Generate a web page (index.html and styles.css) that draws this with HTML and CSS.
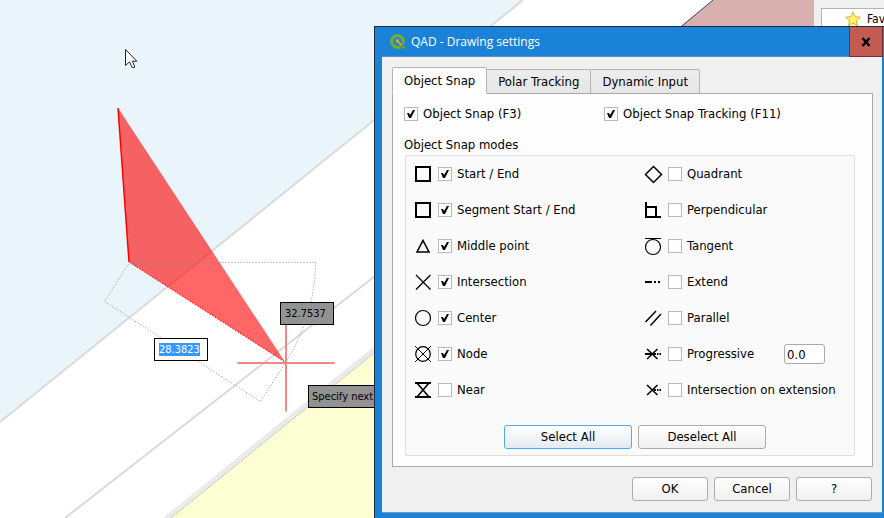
FILE: index.html
```html
<!DOCTYPE html>
<html lang="en">
<head>
<meta charset="utf-8">
<title>QAD - Drawing settings</title>
<link rel="stylesheet" href="styles.css">
</head>
<body>
<main class="desktop">
  <svg class="map" viewBox="0 0 884 518" preserveAspectRatio="xMinYMin slice" aria-hidden="true">
    <rect width="884" height="518" fill="#fff"/>
    <path d="M0 0H523L0 422Z" fill="#e9f4fb"/>
    <path d="M523 0L0 422M420 241L65 518" fill="none" stroke="#dadada" stroke-width="2"/>
    <path d="M163 518L384 338V352L171 518Z" fill="#ebebeb"/>
    <path d="M171 518L374 353H400V518Z" fill="#fcffd2"/>
    <path d="M171 518L374 353" stroke="#aaa" stroke-width=".8" stroke-dasharray="2 1"/>
    <path d="M713 0H815V40H664Z" fill="#d8b0b0"/>
    <path d="M713 0L664 41" stroke="#444"/>
    <path d="M118 108L129 262L285 362Z" fill="#f00" fill-opacity=".6"/>
    <path d="M118 108L129 262" stroke="#f00" stroke-width="1.5"/>
    <path d="M129 262L285 362" stroke="#f00" stroke-dasharray="1.5 1.5"/>
    <path d="M129.500 262.500H315.500A186 186 0 0 1 285.500 362.500L260.500 401.500L104.500 301.500Z" fill="none" stroke="#888" stroke-dasharray="1 2"/>
    <path d="M237.500 363H334.500M286 315V411.500" stroke="#f28787" stroke-width="2"/>
    <path d="M125.500 49.500V65.500L129.500 61.800L132.200 67.500H134.500V66L132.300 61.200H136.800Z" fill="#fff" stroke="#1c2433"/>
  </svg>

  <output class="tip angle">32.7537</output>
  <input class="tip distance" aria-label="Distance" value="28.3823" size="7">
  <div class="tip prompt">Specify next</div>

  <aside class="browser-panel">
    <div class="tree">
      <svg width="16" height="16" viewBox="0 0 16 16" aria-hidden="true"><path d="M8 .8L10.100 5.700L15.300 6.200L11.300 9.700L12.600 15L8 12.200L3.400 15L4.700 9.700L.7 6.200L5.900 5.700Z" fill="#fff36b" stroke="#d8b62a"/></svg>
      <span>Fav</span>
    </div>
  </aside>

  <section class="dialog" role="dialog" aria-labelledby="dialog-title">
    <header class="titlebar">
      <svg class="logo" width="16" height="16" viewBox="0 0 16 16" aria-hidden="true">
        <circle cx="7.500" cy="7.500" r="5.800" fill="none" stroke="#72ad30" stroke-width="3.200"/>
        <path d="M8 8L15 15" stroke="#1a83d8" stroke-width="4.500"/>
        <path d="M9.500 9.500L14.500 14.500" stroke="#5d9f3c" stroke-width="3.600"/>
        <path d="M6 5.500H9.500L8.500 7L12 10.500L10.500 11.500L7.500 8L6 9Z" fill="#f0a13c"/>
      </svg>
      <h1 id="dialog-title">QAD - Drawing settings</h1>
      <button class="close" type="button" aria-label="Close">
        <svg width="10" height="10" viewBox="0 0 10 10" aria-hidden="true"><path d="M1.500 1L8.500 9M8.500 1L1.500 9" stroke="#000" stroke-width="2.400"/></svg>
      </button>
    </header>

    <form class="content">
      <div class="tabs" role="tablist">
        <button class="tab active" type="button" role="tab" aria-selected="true">Object Snap</button>
        <button class="tab" type="button" role="tab" aria-selected="false">Polar Tracking</button>
        <button class="tab" type="button" role="tab" aria-selected="false">Dynamic Input</button>
      </div>

      <div class="pane" role="tabpanel">
        <div class="toggles">
          <label class="check"><input type="checkbox" checked>Object Snap (F3)</label>
          <label class="check"><input type="checkbox" checked>Object Snap Tracking (F11)</label>
        </div>
        <h2 class="caption">Object Snap modes</h2>

        <div class="modes">
          <div class="columns">
            <div class="column">
              <div class="mode">
                <svg class="icon" viewBox="0 0 16 16" aria-hidden="true"><path d="M1 1H15V15H1Z" stroke-width="2"/></svg>
                <label class="check"><input type="checkbox" checked>Start / End</label>
              </div>
              <div class="mode">
                <svg class="icon" viewBox="0 0 16 16" aria-hidden="true"><path d="M1 1H15V15H1Z" stroke-width="2"/></svg>
                <label class="check"><input type="checkbox" checked>Segment Start / End</label>
              </div>
              <div class="mode">
                <svg class="icon" viewBox="0 0 16 16" aria-hidden="true"><path d="M8 2.500L14 14H2Z" stroke-width="1.600"/></svg>
                <label class="check"><input type="checkbox" checked>Middle point</label>
              </div>
              <div class="mode">
                <svg class="icon" viewBox="0 0 16 16" aria-hidden="true"><path d="M1 1L15.500 15.500M15.500 1L1 15.500" stroke-width="1.300"/></svg>
                <label class="check"><input type="checkbox" checked>Intersection</label>
              </div>
              <div class="mode">
                <svg class="icon" viewBox="0 0 16 16" aria-hidden="true"><circle cx="8" cy="8" r="7.500" stroke-width="1.200"/></svg>
                <label class="check"><input type="checkbox" checked>Center</label>
              </div>
              <div class="mode">
                <svg class="icon" viewBox="0 0 16 16" aria-hidden="true"><circle cx="8" cy="8" r="7.300" stroke-width="1.200"/><path d="M0 0L16 16M16 0L0 16" stroke-width="1"/></svg>
                <label class="check"><input type="checkbox" checked>Node</label>
              </div>
              <div class="mode">
                <svg class="icon" viewBox="0 0 16 16" aria-hidden="true"><path d="M0 1H16M0 15H16" stroke-width="2"/><path d="M2 1L14 15M14 1L2 15" stroke-width="1.600"/></svg>
                <label class="check"><input type="checkbox">Near</label>
              </div>
            </div>

            <div class="column">
              <div class="mode">
                <svg class="icon" viewBox="0 0 16 16" aria-hidden="true"><path d="M8.500 .5L16.500 8.500L8.500 16.500L.5 8.500Z" stroke-width="1.500"/></svg>
                <label class="check"><input type="checkbox">Quadrant</label>
              </div>
              <div class="mode">
                <svg class="icon" viewBox="0 0 16 16" aria-hidden="true"><path d="M1 0V15H16M1 5H11V15" stroke-width="2"/></svg>
                <label class="check"><input type="checkbox">Perpendicular</label>
              </div>
              <div class="mode">
                <svg class="icon" viewBox="0 0 16 16" aria-hidden="true"><path d="M0 .5H16" stroke-width="1"/><circle cx="8" cy="9" r="7.500" stroke-width="1.200"/></svg>
                <label class="check"><input type="checkbox">Tangent</label>
              </div>
              <div class="mode">
                <svg class="icon" viewBox="0 0 16 16" aria-hidden="true"><path d="M0 8H7M9 8H11M13 8H15" stroke-width="2"/></svg>
                <label class="check"><input type="checkbox">Extend</label>
              </div>
              <div class="mode">
                <svg class="icon" viewBox="0 0 16 16" aria-hidden="true"><path d="M.5 12L11 1M5.500 15.500L16 4" stroke-width="1.500"/></svg>
                <label class="check"><input type="checkbox">Parallel</label>
              </div>
              <div class="mode">
                <svg class="icon" viewBox="0 0 16 16" aria-hidden="true"><path d="M0 8H11M12 8H13.500M14.500 8H16" stroke-width="2"/><path d="M2 3L12.500 13M12.500 3L2 13" stroke-width="1.500"/></svg>
                <label class="check"><input type="checkbox">Progressive</label>
                <input class="distance-field" type="text" value="0.0" size="4" aria-label="Progressive distance">
              </div>
              <div class="mode">
                <svg class="icon" viewBox="0 0 16 16" aria-hidden="true"><path d="M2 3L12.500 13M12.500 3L2 13" stroke-width="1.500"/><path d="M9 8H11M12 8H13.500M14.500 8H16" stroke-width="2"/></svg>
                <label class="check"><input type="checkbox">Intersection on extension</label>
              </div>
            </div>
          </div>

          <div class="select-buttons">
            <button class="button wide default" type="button">Select All</button>
            <button class="button wide" type="button">Deselect All</button>
          </div>
        </div>
      </div>

      <footer class="actions">
        <button class="button" type="button">OK</button>
        <button class="button" type="button">Cancel</button>
        <button class="button" type="button">?</button>
      </footer>
    </form>
  </section>
</main>
<script src="script.js"></script>
</body>
</html>
```
FILE: styles.css
```css
* {
  box-sizing: border-box;
}

body {
  margin: 0;
  font: 13px/16px "DejaVu Sans Condensed", "DejaVu Sans", sans-serif;
  color: #000;
}

button,
input {
  font: inherit;
  color: inherit;
}

h1,
h2 {
  margin: 0;
  font: inherit;
}

.desktop {
  position: relative;
  height: 100vh;
  min-height: 518px;
  overflow: hidden;
}

.map {
  display: block;
  width: 100%;
  height: 100%;
}

/* Dynamic input boxes that float over the map */
.tip {
  position: absolute;
  height: 23px;
  padding: 0 4px;
  border: 1px solid #000;
  background: #929292;
  font: 11px/21px "DejaVu Sans Condensed", "DejaVu Sans", sans-serif;
  white-space: nowrap;
}

.angle {
  left: 280px;
  top: 302px;
  width: 54px;
}

.distance {
  left: 154px;
  top: 338px;
  width: 54px;
  background: #fff;
  outline: none;
}

.distance::selection {
  background: #3399ff;
  color: #fff;
}

.prompt {
  left: 308px;
  top: 385px;
  width: 80px;
  padding: 0 3px;
}

.browser-panel {
  position: absolute;
  top: 0;
  left: 814px;
  right: 0;
  height: 40px;
  padding: 8px 0 0 7px;
  background: #f0f0f0;
  font-size: 12px;
}

.tree {
  display: flex;
  align-items: center;
  gap: 6px;
  height: 32px;
  padding: 0 0 10px 23px;
  border: 1px solid #b4b4b4;
  border-right: 0;
  background: #fff;
  overflow: hidden;
}

.tree svg {
  flex: none;
}

.dialog {
  position: absolute;
  top: 26px;
  right: 0;
  bottom: 0;
  left: 374px;
  display: flex;
  flex-direction: column;
  padding: 0 2px 5px 7px;
  border-top: 1px solid #1f2c3a;
  border-left: 1px solid #1f2c3a;
  background: #1a83d8;
}

.titlebar {
  display: flex;
  align-items: center;
  height: 30px;
  padding-left: 8px;
  margin-right: -1px;
  border-bottom: 1px solid #5b90c4;
  color: #fff;
  font: 12px/16px "Open Sans", sans-serif;
}

.titlebar h1 {
  flex: 1;
  padding-left: 5px;
}

.close {
  display: flex;
  align-items: center;
  justify-content: center;
  align-self: flex-start;
  width: 34px;
  height: 30px;
  padding: 0;
  border: 1px solid #69333a;
  border-top: 0;
  background: #c35b51;
}

.content {
  flex: 1;
  padding: 10px 9px 0 10px;
  border-bottom: 1px solid #6b9dc7;
  background: #f0f0f0;
}

.tabs {
  display: flex;
  align-items: flex-end;
  height: 27px;
  margin-bottom: -1px;
}

.tab {
  height: 25px;
  margin-left: -1px;
  padding: 0 11px;
  border: 1px solid #b4b4b4;
  border-bottom-color: #a9a9a9;
  border-radius: 2px 2px 0 0;
  background: linear-gradient(#ededed, #e6e6e6);
  white-space: nowrap;
}

.tab.active {
  position: relative;
  height: 27px;
  margin-left: 0;
  border-bottom-color: #fdfdfd;
  background: #fdfdfd;
}

.pane {
  padding: 12px 17px 10px 12px;
  border: 1px solid #a9a9a9;
  background: #fdfdfd;
}

.toggles {
  display: grid;
  grid-template-columns: 200px 1fr;
  margin-left: -1px;
}

.check {
  display: flex;
  align-items: center;
  gap: 5px;
  white-space: nowrap;
}

.check input {
  appearance: none;
  display: block;
  flex: none;
  width: 14px;
  height: 14px;
  margin: 0;
  border: 1px solid #b9b9b9;
  background: #fff;
}

.check input:checked::before {
  content: "";
  display: block;
  width: 12px;
  height: 12px;
  background: #000;
  clip-path: polygon(2px 5px, 4px 5px, 5px 7px, 8px 2px, 10px 2px, 6px 10px, 4px 10px);
}

.caption {
  padding: 15px 0 2px;
  margin-left: -1px;
}

.modes {
  padding: 0 9px 6px;
  border: 1px solid #dedede;
  border-radius: 2px;
  background: #fafafa;
}

.columns {
  display: grid;
  grid-template-columns: 230px 1fr;
}

.mode {
  display: flex;
  align-items: center;
  gap: 7px;
  height: 36px;
}

.icon {
  flex: none;
  width: 16px;
  height: 16px;
  overflow: visible;
  fill: none;
  stroke: #000;
}

.distance-field {
  width: 41px;
  height: 20px;
  margin-left: auto;
  margin-right: 20px;
  padding: 0 2px;
  border: 1px solid #a9a9a9;
  border-radius: 3px;
  background: #fff;
}

.select-buttons {
  display: flex;
  justify-content: center;
  gap: 6px;
  padding: 17px 0 0 10px;
}

.button {
  width: 76px;
  height: 24px;
  padding: 0;
  border: 1px solid #adadad;
  border-radius: 3px;
  background: linear-gradient(#fff, #f0f0f0);
}

.button.wide {
  width: 128px;
}

.button.default {
  border-color: #4dabf5;
  background: linear-gradient(#fff, #e4eaf0);
}

.actions {
  display: flex;
  justify-content: flex-end;
  gap: 6px;
  padding: 10px 1px 0 0;
}
```
FILE: script.js
```js
const distance = document.querySelector(".distance");
distance.focus();
distance.select();
```
